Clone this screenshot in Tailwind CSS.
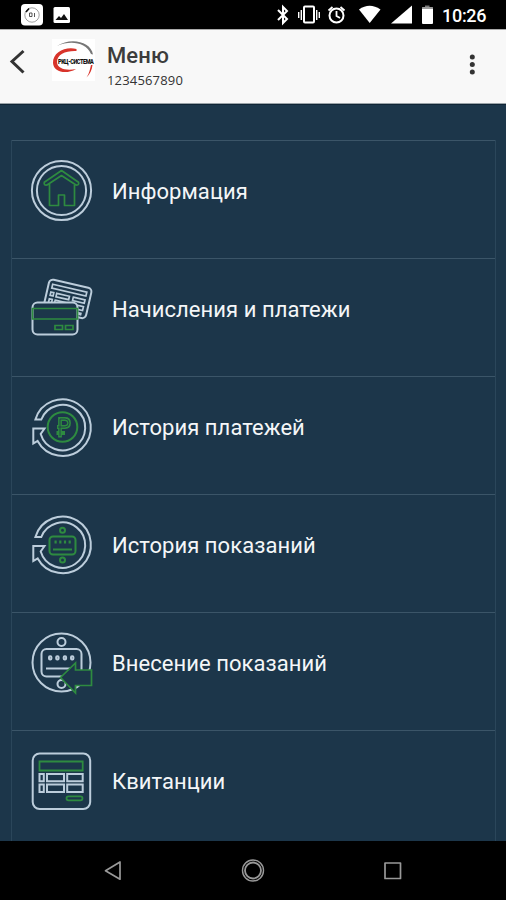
<!DOCTYPE html>
<html lang="ru">
<head>
<meta charset="utf-8">
<title>Меню</title>
<script src="https://cdn.jsdelivr.net/npm/@tailwindcss/browser@4"></script>
</head>
<body class="w-[506px] h-[900px] overflow-hidden flex flex-col bg-[#1c364a] font-['Roboto',sans-serif]">
<div class="h-[29px] shrink-0 bg-black">
<svg width="506" height="29" viewBox="0 0 506 29" fill="none">
<rect x="21" y="4" width="22" height="21.500" rx="4" fill="#fff"/>
<circle cx="32" cy="15" r="7.200" stroke="#777" stroke-width=".7"/>
<path d="M26 12l3-3.500" stroke="#111" stroke-width="1.600"/>
<path d="M29.500 13v3.500h2.500v-3.500zM34.500 13v4" stroke="#444" stroke-width=".9"/>
<rect x="53.500" y="7" width="16.500" height="16" rx="1.500" fill="#fff"/>
<path d="M55.500 20l3.500-4 2 2 3-4 4 6z" fill="#111"/>
<path d="M278 10l9 9-4 4v-16l4 4-9 9" stroke="#fff" stroke-width="2"/>
<rect x="304" y="6.500" width="10" height="16" rx="1" stroke="#fff" stroke-width="2"/>
<path d="M301.300 10v10M298.700 12v6M316.700 10v10M319.300 12v6" stroke="#fff" stroke-width="1.400"/>
<circle cx="336.500" cy="15.500" r="7" stroke="#fff" stroke-width="2"/>
<path d="M336.500 11v5l3.500 2M328.500 10.500l4-3.500M344.500 10.500l-4-3.500" stroke="#fff" stroke-width="1.800"/>
<path d="M359 9.500Q369.500 2 380.500 9.500L369.700 23z" fill="#fff"/>
<path d="M391 23.500L412 5.500v18z" fill="#fff"/>
<path d="M425 5.500h4.500v2h-4.500z" fill="#777"/>
<rect x="422" y="7" width="11" height="17" rx="1" fill="#fff"/><path d="M422 8h11" stroke="#777" stroke-width="1.500"/>
<text x="442" y="22" fill="#fff" font-family="Roboto" font-size="18" font-weight="500" textLength="44.500">10:26</text>
</svg>
</div>
<header class="h-[75px] shrink-0 bg-[#f8f8f8] border-t border-t-[#aaa] border-b border-b-[#9aa3a8] flex">
<svg class="shrink-0" width="107" height="73" viewBox="0 30 107 73" fill="none">
<path d="M23.500 51L12 61.500 23.500 72.500" stroke="#333" stroke-width="3"/>
<rect x="52" y="39" width="43" height="42" fill="#fff"/>
<path d="M57 46C70 37 91 41 93 54.500L91 54C86 42 70 40 57 46z" fill="#777"/>
<path d="M76.500 49C66 46 52.500 52 53 63C53.500 72 66 75 76 69C67 71 57 69 57 62C57 54 66 50.500 76.500 51z" fill="#d8342b"/>
<path d="M92.500 65C92 70 90 74 86.500 77.500C89.500 73 90 69 91 65z" fill="#d8342b"/>
<text transform="translate(58 63.500) scale(.74 1)" x="0" y="0" fill="#111" font-family="Roboto" font-size="7.500" font-weight="900" textLength="48.500">РКЦ-СИСТЕМА</text>
</svg>
<div class="flex-1 pt-[13px]">
<h1 class="text-[22px] leading-[26px] font-medium tracking-[0.100px] text-[#3c3c3c]">Меню</h1>
<p class="text-[13px] leading-[23px] tracking-[0.170px] text-[#333] font-['Open_Sans',sans-serif]">1234567890</p>
</div>
<svg class="shrink-0 mr-[26px]" width="16" height="73" viewBox="0 30 16 73" fill="#333"><circle cx="8.300" cy="57" r="2.500"/><circle cx="8.300" cy="64.500" r="2.500"/><circle cx="8.300" cy="72" r="2.500"/></svg>
</header>
<main class="h-[737px] shrink-0 overflow-hidden pt-[36px] pl-[11px] pr-[10px] border-t border-t-[#102536]">
<ul class="border-x border-[#2b465a] -mt-px">
<li class="h-[118px] border-t border-[#3b5568] flex pl-[8px] pt-[9px]">
<svg width="85" height="80" viewBox="0 0 85 80" fill="none" stroke="#bccddb" stroke-width="2"><circle cx="41.500" cy="40.500" r="29.600"/><circle cx="41.500" cy="40.500" r="24.600"/><path stroke="#2e8b40" stroke-width="1.700" stroke-linejoin="round" d="M41.500 20.500L24.300 32.200Q23.500 35.500 27 35L41.500 25.500 56 35Q59.500 35.500 58.500 32.200zM29.500 33.500V55.500H38.500V45H44.500V55.500H54.500V33.500"/></svg>
<span class="pl-[7px] pt-[28px] text-[22px] leading-[28px] tracking-[0.050px] text-[#f4f6f8]">Информация</span></li>
<li class="h-[118px] border-t border-[#3b5568] flex pl-[8px] pt-[9px]">
<svg width="85" height="80" viewBox="0 -2 85 80" fill="none" stroke="#bccddb" stroke-width="2"><g transform="rotate(13 48 28)"><rect x="26" y="13.500" width="43.500" height="31" rx="4"/><path stroke-width="1.700" d="M30 18h35v4H30zM30 26h3v3.500h-3zM36 26h13v3.500H36zM53 26h12v3.500H53zM30 33h3v4h-3zM36 33h13v4H36zM53 33h12v4H53zM56 40h8v1.500h-8z"/></g><rect x="12.500" y="32.500" width="45" height="32" rx="5" fill="#1c364a"/><path stroke="#2e8b40" stroke-width="1.700" d="M12.500 38.500h45v10.500h-45zM35 55.500h7.500v4H35zM45.500 55.500H53v4h-7.500z"/></svg>
<span class="pl-[7px] pt-[28px] text-[22px] leading-[28px] tracking-[0.050px] text-[#f4f6f8]">Начисления и платежи</span></li>
<li class="h-[118px] border-t border-[#3b5568] flex pl-[8px] pt-[9px]">
<svg width="85" height="80" viewBox="0 -4 85 80" fill="none" stroke="#bccddb" stroke-width="2"><path d="M15.400 29.500A28.300 28.300 0 1 1 17.600 51L13.300 53.500V38.500H24.500L20.700 44A22.700 22.700 0 1 0 21.300 29.500z"/><g stroke="#2e8b40"><circle cx="42.500" cy="37" r="14.800"/><path stroke-width="3.800" d="M40 47.500V29H45Q49 29 49 33T45 37H37M36.500 43H45"/><path stroke="#1c364a" stroke-width=".8" d="M40 46V29H45Q49 29 49 33T45 37H38"/></g></svg>
<span class="pl-[7px] pt-[28px] text-[22px] leading-[28px] tracking-[0.050px] text-[#f4f6f8]">История платежей</span></li>
<li class="h-[118px] border-t border-[#3b5568] flex pl-[8px] pt-[9px]">
<svg width="85" height="80" viewBox="0 -1 85 80" fill="none" stroke="#bccddb" stroke-width="2"><path d="M15.400 32A28.300 28.300 0 1 1 17.700 53.400L13.300 56V41H24.500L20.700 46.500A22.700 22.700 0 1 0 21.300 32z"/><g stroke="#2e8b40"><circle cx="42.500" cy="25.300" r="2.500"/><circle cx="42.500" cy="55" r="2.500"/><rect x="29.500" y="31.500" width="26" height="18" rx="3.500"/><path d="M33 44.500h19"/><path stroke-width="3" stroke-dasharray="2.200 2.500" d="M34.500 37h17"/></g></svg>
<span class="pl-[7px] pt-[28px] text-[22px] leading-[28px] tracking-[0.050px] text-[#f4f6f8]">История показаний</span></li>
<li class="h-[118px] border-t border-[#3b5568] flex pl-[8px] pt-[9px]">
<svg width="85" height="80" viewBox="0 0 85 80" fill="none" stroke="#bccddb" stroke-width="2"><circle cx="41.500" cy="40.500" r="29"/><circle cx="41.500" cy="20" r="4"/><circle cx="41.500" cy="62" r="4"/><rect x="21.500" y="27" width="40" height="27.500" rx="5" fill="#1c364a"/><path d="M26 46.500h25"/><g stroke-width="2"><rect x="29" y="34.200" width="2.400" height="3.200" rx="1"/><rect x="36.200" y="34.200" width="2.400" height="3.200" rx="1"/><rect x="43.700" y="34.200" width="2.400" height="3.200" rx="1"/><rect x="51" y="34.200" width="2.400" height="3.200" rx="1"/></g><path fill="#1c364a" stroke="#2e8b40" stroke-width="1.700" d="M40.500 55.500L55.500 41V48H71.500V63.500H55.500V71z"/></svg>
<span class="pl-[7px] pt-[28px] text-[22px] leading-[28px] tracking-[0.050px] text-[#f4f6f8]">Внесение показаний</span></li>
<li class="h-[118px] border-t border-[#3b5568] flex pl-[8px] pt-[9px]">
<svg width="85" height="80" viewBox="0 0 85 80" fill="none" stroke="#bccddb" stroke-width="2"><rect x="12.700" y="13.500" width="57.500" height="55.500" rx="7"/><path d="M19.500 34h4.300v7.300h-4.300zM27 34h17v7.300H27zM47.200 34h15.500v7.300H47.200zM19.500 44.500h4.300v7.500h-4.300zM27 44.500h17v7.500H27zM47.200 44.500h15.500v7.500H47.200z"/><g stroke="#2e8b40" stroke-width="1.800"><path d="M19.500 21.500h43.200v9H19.500z"/><rect x="46.500" y="56.300" width="16" height="4" rx="2"/></g></svg>
<span class="pl-[7px] pt-[28px] text-[22px] leading-[28px] tracking-[0.050px] text-[#f4f6f8]">Квитанции</span></li>
</ul>
</main>
<nav class="h-[59px] shrink-0 bg-black">
<svg width="506" height="59" viewBox="0 841 506 59" fill="none" stroke="#999" stroke-width="1.700" stroke-linejoin="round"><path d="M120 862v17.200L105.500 870.700z"/><circle cx="253" cy="870.500" r="10.500" stroke-width="1.400"/><circle cx="253" cy="870.500" r="8" stroke-width="1.800"/><rect x="385" y="863" width="15.500" height="15.500"/></svg>
</nav>
</body>
</html>
